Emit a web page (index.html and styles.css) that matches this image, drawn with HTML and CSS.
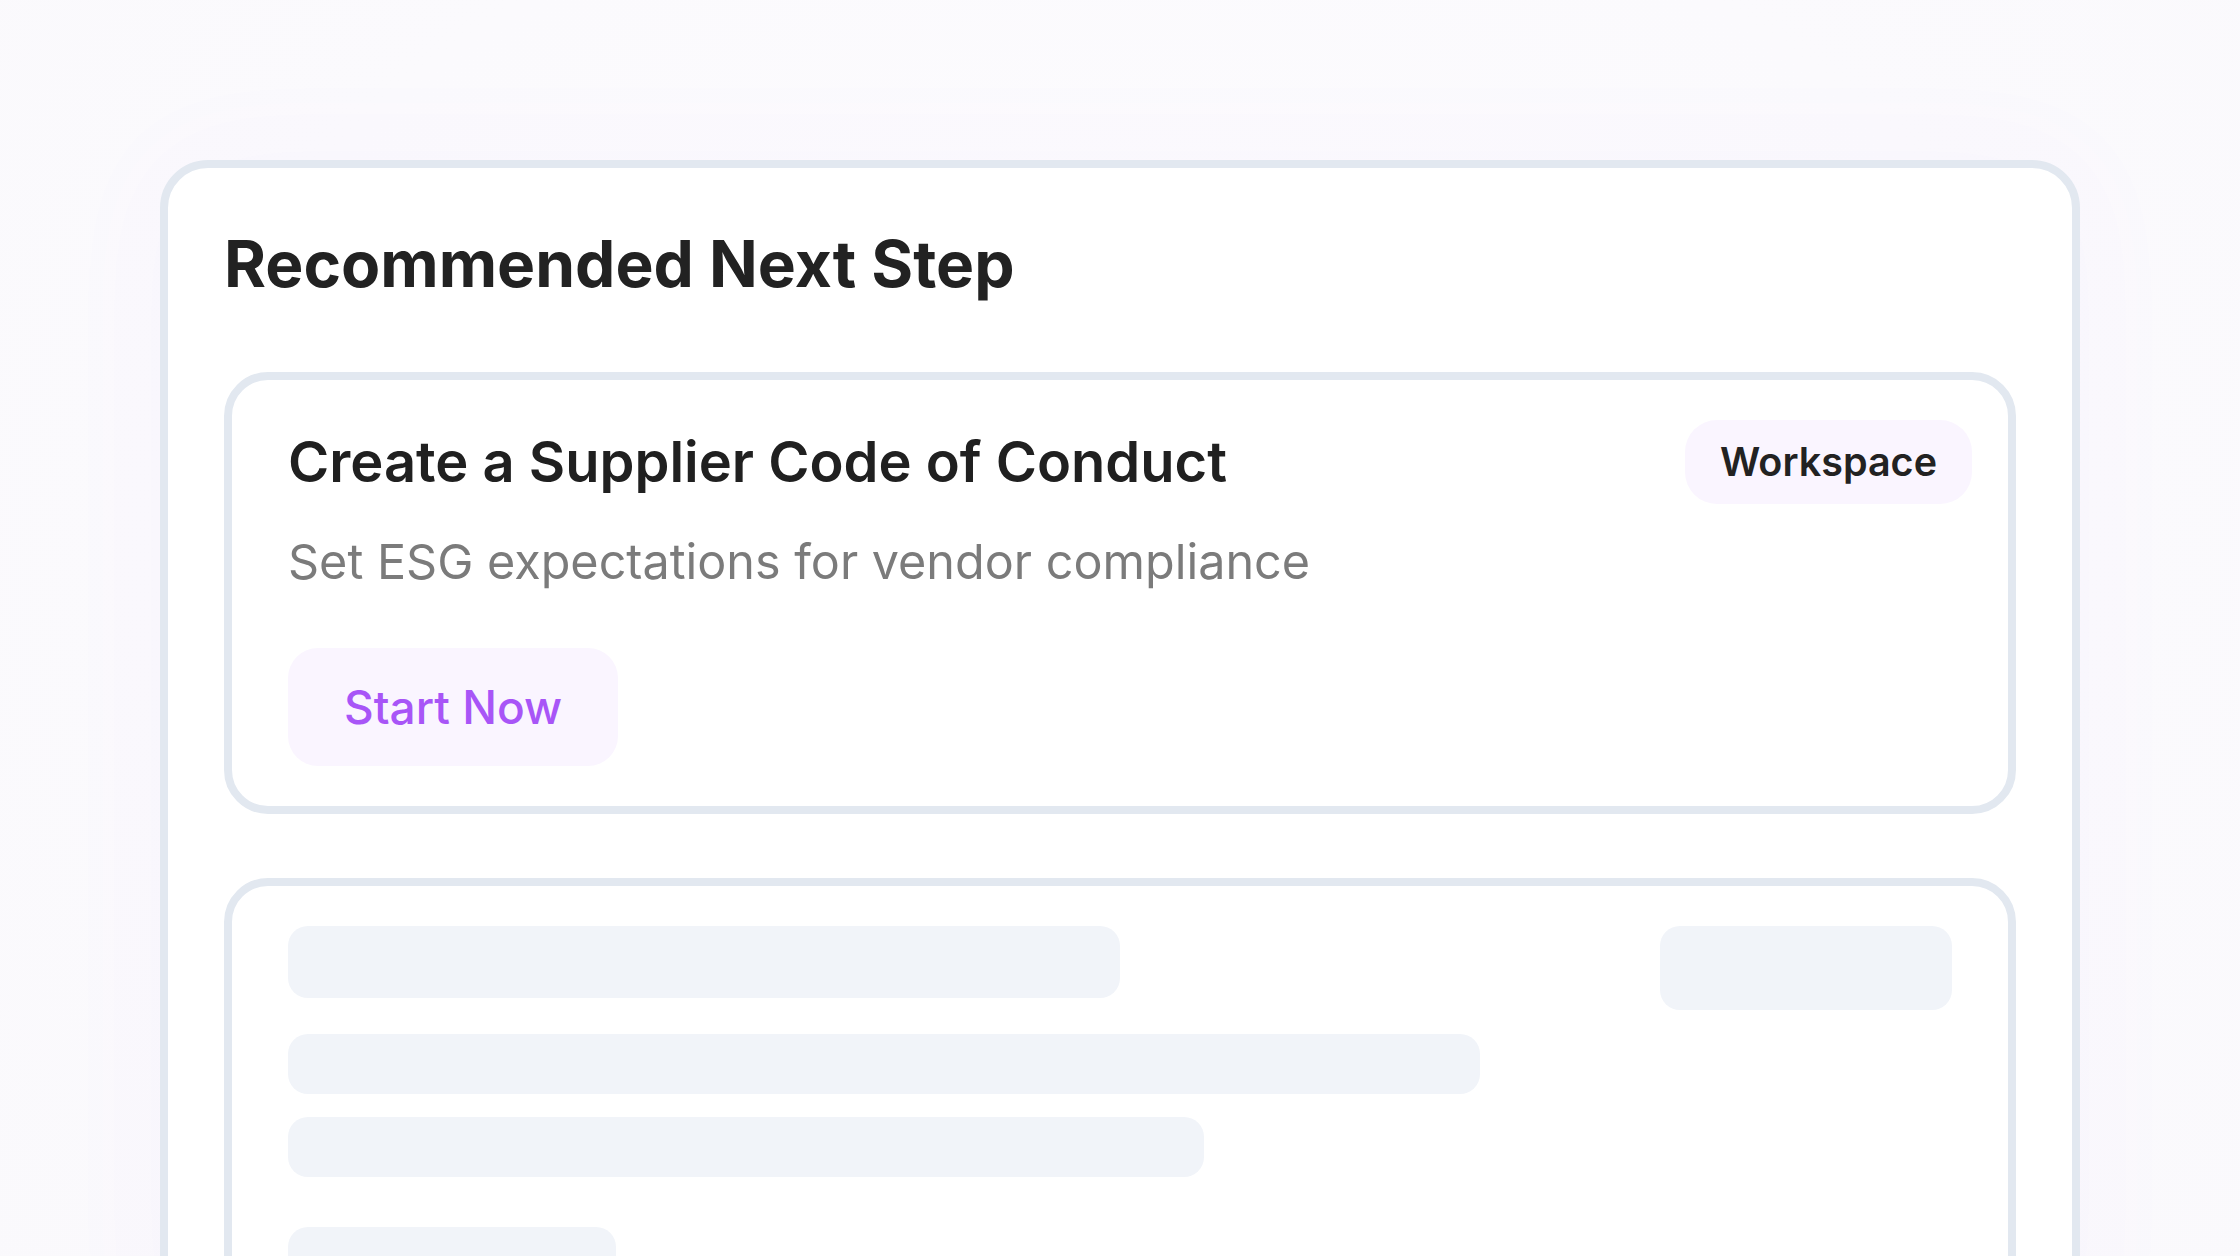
FILE: index.html
```html
<!DOCTYPE html>
<html lang="en">
<head>
<meta charset="utf-8">
<title>Recommended Next Step</title>
<link rel="stylesheet" href="styles.css">
</head>
<body>
<main class="stage">
  <section class="panel">
    <h2 class="panel-title">Recommended Next Step</h2>

    <article class="step-card">
      <div class="step-head">
        <h3 class="step-title">Create a Supplier Code of Conduct</h3>
        <span class="badge">Workspace</span>
      </div>
      <p class="step-desc">Set ESG expectations for vendor compliance</p>
      <button class="btn-start" type="button">Start Now</button>
    </article>

    <article class="step-card skeleton-card" aria-hidden="true">
      <div class="skel-head">
        <div class="skel skel-title"></div>
        <div class="skel skel-badge"></div>
      </div>
      <div class="skel skel-line skel-line-long"></div>
      <div class="skel skel-line skel-line-mid"></div>
      <div class="skel skel-button"></div>
    </article>
  </section>
</main>
</body>
</html>
```

FILE: styles.css
```css
html, body {
  margin: 0;
  padding: 0;
  overflow: hidden;
  height: 100%;
}

body {
  background: #fbfafd;
  font-family: "Inter", "Noto Sans", "Liberation Sans", sans-serif;
  color: #222222;
}

.stage {
  padding: 160px 160px 0;
  background: radial-gradient(ellipse at 50% 40%, #fdfcfe 0%, #fbfafd 60%, #faf9fc 100%);
  min-height: 100%;
  box-sizing: border-box;
}

.panel {
  background: #ffffff;
  border: 8px solid #e2e8f0;
  border-radius: 48px;
  padding: 56px 56px 0;
  height: 1200px;
  box-sizing: border-box;
  box-shadow: 0 0 120px rgba(168, 85, 247, 0.035);
}

.panel-title {
  margin: 0 0 68px;
  font-size: 64px;
  line-height: 80px;
  font-weight: 700;
  color: #222222;
}

.step-card {
  border: 8px solid #e2e8f0;
  border-radius: 44px;
  padding: 40px 36px 40px 56px;
  background: #ffffff;
}

.step-head {
  display: flex;
  align-items: center;
  justify-content: space-between;
}

.step-title {
  margin: 0;
  font-size: 56px;
  line-height: 64px;
  font-weight: 600;
  color: #202020;
}

.badge {
  display: inline-flex;
  align-items: center;
  height: 84px;
  padding: 0 35px;
  box-sizing: border-box;
  border-radius: 32px;
  background: #faf5ff;
  font-size: 39.5px;
  font-weight: 600;
  color: #222222;
}

.step-desc {
  margin: 30px 0 58px;
  font-size: 48.5px;
  line-height: 56px;
  color: #7b7b7b;
  font-weight: 400;
}

.btn-start {
  display: inline-flex;
  align-items: center;
  height: 118px;
  padding: 0 56px;
  border: 0;
  border-radius: 30px;
  background: #faf5ff;
  color: #a855f7;
  font-family: inherit;
  font-size: 46px;
  font-weight: 500;
  cursor: pointer;
}

.skeleton-card {
  margin-top: 64px;
  padding: 40px 56px;
}

.skel {
  background: #f1f4f9;
  border-radius: 20px;
}

.skel-head {
  display: flex;
  justify-content: space-between;
  align-items: flex-start;
}

.skel-title {
  width: 832px;
  height: 72px;
}

.skel-badge {
  width: 292px;
  height: 84px;
}

.skel-line {
  height: 60px;
}

.skel-line-long {
  width: 1192px;
  margin-top: 24px;
}

.skel-line-mid {
  width: 916px;
  margin-top: 23px;
}

.skel-button {
  width: 328px;
  height: 118px;
  margin-top: 50px;
}
```
